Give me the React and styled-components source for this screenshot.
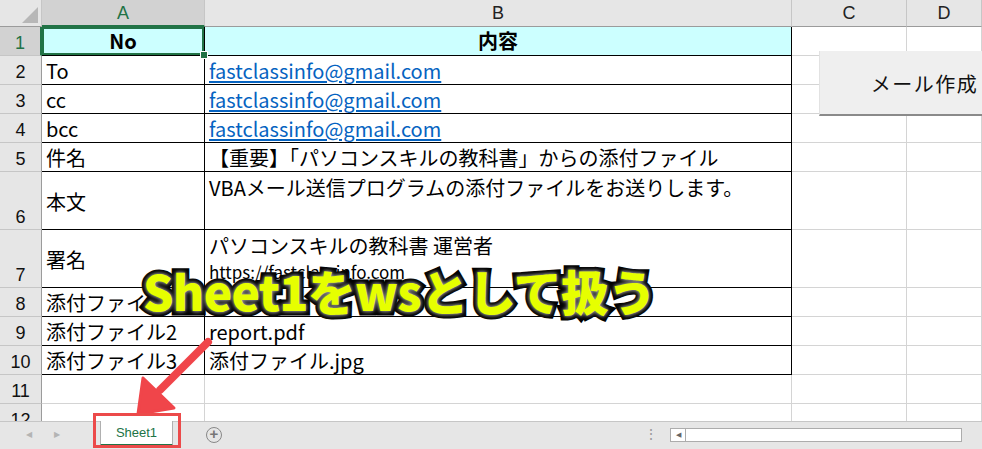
import React from 'react'
import styled, { createGlobalStyle } from 'styled-components'

const GlobalStyle = createGlobalStyle`
  html, body { margin: 0; padding: 0; background: #fff; }
  body { font-family: "Noto Sans CJK JP", "Noto Sans", sans-serif; }
`

const COLS = '42px 163px 587px 115px 1fr'
const ROWS = '27px 29px 29px 29px 29px 29px 58px 58px 29px 29px 29px 29px 29px'

const rows = [
  { n: 1, a: 'No', b: '内容', head: true },
  { n: 2, a: 'To', b: 'fastclassinfo@gmail.com', link: true },
  { n: 3, a: 'cc', b: 'fastclassinfo@gmail.com', link: true },
  { n: 4, a: 'bcc', b: 'fastclassinfo@gmail.com', link: true },
  { n: 5, a: '件名', b: '【重要】「パソコンスキルの教科書」からの添付ファイル' },
  { n: 6, a: '本文', b: 'VBAメール送信プログラムの添付ファイルをお送りします。', tall: true },
  { n: 7, a: '署名', b: 'パソコンスキルの教科書 運営者', b2: 'https://fastclassinfo.com', tall: true },
  { n: 8, a: '添付ファイル1', b: '' },
  { n: 9, a: '添付ファイル2', b: 'report.pdf' },
  { n: 10, a: '添付ファイル3', b: '添付ファイル.jpg' },
  { n: 11 },
  { n: 12 },
]

const App = () => {
  return (
    <Page>
      <GlobalStyle />
      <Sheet>
        <Corner><CornerTri /></Corner>
        <ColHead $active>A</ColHead>
        <ColHead>B</ColHead>
        <ColHead>C</ColHead>
        <ColHead>D</ColHead>
        {rows.map((r) => {
          const inTable = r.n <= 10
          return (
            <React.Fragment key={r.n}>
              <RowHead $active={r.n === 1}>{r.n}</RowHead>
              <Cell $table={inTable} $head={r.head} $selected={r.n === 1} $center={r.tall}>
                {r.a}
              </Cell>
              <Cell $table={inTable} $head={r.head} $top={r.tall}>
                {r.link ? <Link>{r.b}</Link> : r.b}
                {r.b2 && <SmallLine>{r.b2}</SmallLine>}
              </Cell>
              <Cell />
              <Cell />
            </React.Fragment>
          )
        })}
      </Sheet>
      <TabBar>
        <NavArrows>
          <span>◀</span>
          <span>▶</span>
        </NavArrows>
        <Tab>Sheet1</Tab>
        <AddSheet>+</AddSheet>
        <Spacer />
        <Dots>⋮</Dots>
        <Scroll>
          <ScrollBtn>◀</ScrollBtn>
        </Scroll>
      </TabBar>

      <MailButton>メール作成</MailButton>
      <Caption>Sheet1をwsとして扱う</Caption>
      <Arrow width="90" height="90" viewBox="0 0 90 90">
        <line x1="80" y1="6" x2="32" y2="54" stroke="#f0454a" strokeWidth="8" strokeLinecap="round" />
        <polygon points="10,78 15,42 46,72" fill="#f0454a" stroke="#f0454a" strokeWidth="3" strokeLinejoin="round" />
      </Arrow>
      <Highlight />
    </Page>
  )
}

export default App

const Page = styled.div`
  position: relative;
  width: 982px;
  height: 449px;
  overflow: hidden;
  display: flex;
  flex-direction: column;
  background: #fff;
`

const Sheet = styled.div`
  display: grid;
  grid-template-columns: ${COLS};
  grid-template-rows: ${ROWS};
  height: 421px;
  overflow: hidden;
  flex: none;
`

const Corner = styled.div`
  position: relative;
  background: #e6e6e6;
  border-right: 1px solid #c6c6c6;
  border-bottom: 1px solid #9b9b9b;
`

const CornerTri = styled.div`
  position: absolute;
  right: 3px;
  bottom: 3px;
  width: 0;
  height: 0;
  border-left: 16px solid transparent;
  border-bottom: 16px solid #b7b7b7;
`

const ColHead = styled.div`
  box-sizing: border-box;
  display: flex;
  align-items: center;
  justify-content: center;
  background: ${(p) => (p.$active ? '#d2d2d2' : '#e6e6e6')};
  color: ${(p) => (p.$active ? '#217346' : '#222')};
  border-right: 1px solid #c6c6c6;
  border-bottom: ${(p) => (p.$active ? '2px solid #217346' : '1px solid #9b9b9b')};
  font-family: "Liberation Sans", Arial, sans-serif;
  font-size: 18px;
  padding-top: 1px;
`

const RowHead = styled.div`
  box-sizing: border-box;
  display: flex;
  align-items: flex-end;
  justify-content: center;
  padding-bottom: 3px;
  background: ${(p) => (p.$active ? '#d2d2d2' : '#e6e6e6')};
  color: ${(p) => (p.$active ? '#217346' : '#111')};
  border-right: ${(p) => (p.$active ? '2px solid #217346' : '1px solid #9b9b9b')};
  border-bottom: 1px solid #c6c6c6;
  font-family: "Liberation Sans", Arial, sans-serif;
  font-size: 18px;
  line-height: 1;
`

const Cell = styled.div`
  position: relative;
  box-sizing: border-box;
  display: flex;
  flex-direction: column;
  justify-content: ${(p) => (p.$head ? 'center' : p.$top ? 'flex-start' : p.$center ? 'center' : 'flex-end')};
  align-items: ${(p) => (p.$head ? 'center' : 'flex-start')};
  padding: ${(p) => (p.$top ? '3px 4px 0' : p.$center ? '2px 4px 0' : '0 4px 0')};
  background: ${(p) => (p.$head ? '#ccffff' : '#fff')};
  border-right: 1px solid ${(p) => (p.$table ? '#000' : '#d4d4d4')};
  border-bottom: 1px solid ${(p) => (p.$table ? '#000' : '#d4d4d4')};
  font-size: 20px;
  font-weight: ${(p) => (p.$head ? 700 : 400)};
  color: #000;
  white-space: nowrap;
  line-height: 1.3;
  ${(p) => p.$selected && `
    box-shadow: inset 0 0 0 2px #217346;
    &::after {
      content: '';
      position: absolute;
      right: -4px;
      bottom: -4px;
      width: 6px;
      height: 6px;
      background: #217346;
      border: 1px solid #fff;
      z-index: 2;
    }
  `}
`

const Link = styled.span`
  color: #0563c1;
  text-decoration: underline;
  text-underline-offset: 2px;
`

const SmallLine = styled.span`
  font-size: 17px;
  margin-top: 2px;
`

const TabBar = styled.div`
  flex: 1;
  display: flex;
  align-items: flex-start;
  background: #e6e6e6;
  border-top: 1px solid #c6c6c6;
  font-family: "Liberation Sans", Arial, sans-serif;
`

const NavArrows = styled.div`
  display: flex;
  gap: 22px;
  padding: 8px 0 0 26px;
  width: 74px;
  color: #b4b4b4;
  font-size: 8px;
`

const Tab = styled.div`
  box-sizing: border-box;
  width: 73px;
  height: 25px;
  background: #fff;
  border-left: 1px solid #b0b0b0;
  border-right: 1px solid #b0b0b0;
  border-bottom: 2px solid #217346;
  color: #217346;
  font-size: 13px;
  display: flex;
  align-items: center;
  justify-content: center;
  margin-top: -1px;
`

const AddSheet = styled.div`
  box-sizing: border-box;
  width: 16px;
  height: 16px;
  margin: 5px 0 0 33px;
  border: 1.5px solid #888;
  border-radius: 50%;
  color: #777;
  font-size: 15px;
  font-weight: 700;
  line-height: 12px;
  text-align: center;
`

const Spacer = styled.div`
  flex: 1;
`

const Dots = styled.div`
  color: #999;
  font-size: 14px;
  margin: 4px 12px 0 0;
`

const Scroll = styled.div`
  box-sizing: border-box;
  width: 292px;
  height: 14px;
  margin: 6px 20px 0 0;
  background: #fff;
  border: 1px solid #acacac;
  display: flex;
`

const ScrollBtn = styled.div`
  width: 14px;
  border-right: 1px solid #acacac;
  color: #666;
  font-size: 7px;
  display: flex;
  align-items: center;
  justify-content: center;
`

const MailButton = styled.div`
  position: absolute;
  left: 819px;
  top: 51px;
  width: 210px;
  height: 65px;
  box-sizing: border-box;
  background: #efefef;
  border-bottom: 2px solid #8a8a8a;
  border-left: 1px solid #e2e2e2;
  display: flex;
  align-items: center;
  justify-content: center;
  font-size: 20px;
  color: #111;
  letter-spacing: 1.5px;
  padding-top: 2px;
`

const Caption = styled.div`
  position: absolute;
  left: 143px;
  top: 262px;
  font-family: "Noto Sans CJK JP", sans-serif;
  font-weight: 900;
  font-size: 48px;
  line-height: 1.2;
  color: #e6ff00;
  -webkit-text-stroke: 9px #000;
  paint-order: stroke fill;
  text-shadow: 0 0 3px #888, 0 0 5px #aaa;
  white-space: nowrap;
  letter-spacing: -0.8px;
`

const Arrow = styled.svg`
  position: absolute;
  left: 128px;
  top: 336px;
`

const Highlight = styled.div`
  position: absolute;
  left: 93px;
  top: 413px;
  width: 88px;
  height: 35px;
  box-sizing: border-box;
  border: 3px solid #ec4a4a;
`
